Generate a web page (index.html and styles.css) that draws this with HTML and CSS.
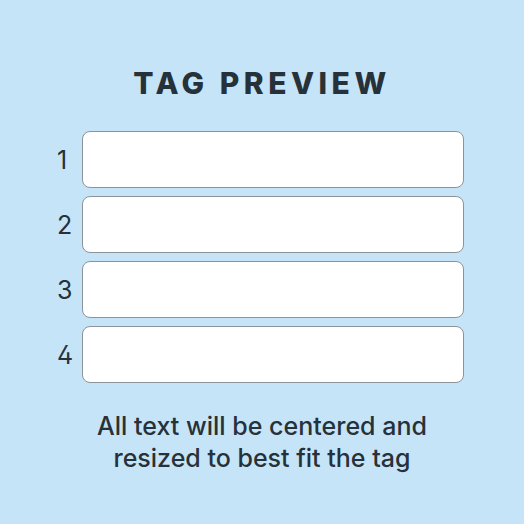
FILE: index.html
```html
<!DOCTYPE html>
<html lang="en">
  <head>
    <meta charset="UTF-8" />
    <meta name="viewport" content="width=device-width, initial-scale=1.0" />
    <title>Tag Preview</title>
    <link rel="stylesheet" href="styles.css">
  </head>
  <body>
    <div class="container">
      <h1>Tag Preview</h1>

      <div class="lines">
        <div class="line">
          <span class="num">1</span>
          <input type="text" class="tag-input" />
        </div>
        <div class="line">
          <span class="num">2</span>
          <input type="text" class="tag-input" />
        </div>
        <div class="line">
          <span class="num">3</span>
          <input type="text" class="tag-input" />
        </div>
        <div class="line">
          <span class="num">4</span>
          <input type="text" class="tag-input" />
        </div>
      </div>

      <p class="nota">All text will be centered and<br />resized to best fit the tag</p>
    </div>
  </body>
</html>
```

FILE: styles.css
```css
body,
html {
  margin: 0;
  padding: 0;
  font-family: Inter, "Noto Sans", sans-serif;
  background-color: #c6e4f7;
  color: #263139;
  height: 100%;
}

.container {
  display: flex;
  flex-direction: column;
  align-items: center;
  padding-top: 64px;
}

h1 {
  margin: 0;
  font-size: 30px;
  font-weight: 800;
  letter-spacing: 4.5px;
  text-transform: uppercase;
  line-height: 38px;
}

.lines {
  display: flex;
  flex-direction: column;
  gap: 8px;
  margin-top: 29px;
  margin-left: -3px;
}

.line {
  display: flex;
  align-items: center;
}

.num {
  width: 25px;
  font-size: 25px;
  font-weight: 400;
  font-feature-settings: "cv02";
  text-align: left;
}

.tag-input {
  width: 382px;
  height: 57px;
  box-sizing: border-box;
  border: 1px solid #8c939a;
  border-radius: 8px;
  background-color: #fff;
  font-size: 1rem;
}

.nota {
  margin: 27px 0 0;
  text-align: center;
  font-size: 25px;
  font-weight: 500;
  line-height: 32px;
}
```
